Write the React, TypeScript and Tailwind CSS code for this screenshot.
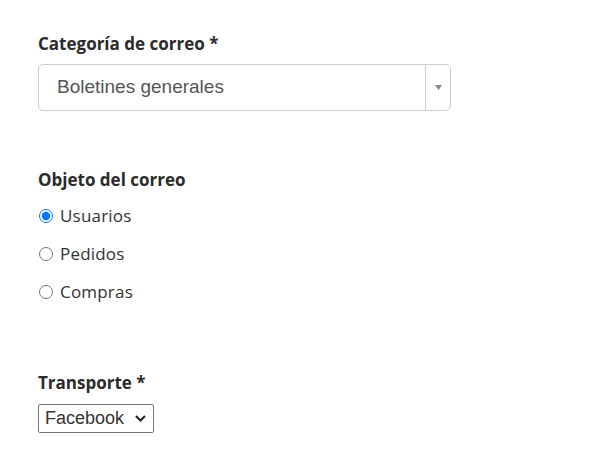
import { useState } from 'react';

const labelFont = { fontFamily: '"Open Sans", "Noto Sans", sans-serif' };
const arial = { fontFamily: '"Liberation Sans", Arial, sans-serif' };

export default function App() {
  const [target, setTarget] = useState('usuarios');

  const options = [
    { id: 'usuarios', label: 'Usuarios' },
    { id: 'pedidos', label: 'Pedidos' },
    { id: 'compras', label: 'Compras' },
  ];

  return (
    <div className="min-h-[473px] w-[590px] bg-white pl-[38px] pt-[33px] text-[#333]" style={labelFont}>
      <div className="w-[413px]">
        <label className="block text-[17px] font-bold leading-[22px] text-[#2b2b2b]">
          Categoría de correo *
        </label>
        <div className="mt-[9px] flex h-[47px] items-stretch rounded-[5px] border border-[#ccc] bg-white">
          <div className="flex flex-1 items-center pl-[18px] text-[19px] text-[#555]" style={arial}>
            Boletines generales
          </div>
          <div className="my-[-1px] w-px bg-[#ccc]" />
          <div className="flex w-[24px] items-center justify-center">
            <svg width="7" height="5" viewBox="0 0 7 5">
              <path d="M0 0h7L3.5 5z" fill="#888" />
            </svg>
          </div>
        </div>
      </div>

      <div className="mt-[58px]">
        <div className="text-[17px] font-bold leading-[22px] text-[#2b2b2b]">Objeto del correo</div>
        <div className="mt-[6px] flex flex-col">
          {options.map((o) => (
            <label
              key={o.id}
              className="flex h-[38px] items-center gap-[8px] text-[17px] tracking-[0.2px] text-[#333]"
            >
              <input
                type="radio"
                name="objeto"
                checked={target === o.id}
                onChange={() => setTarget(o.id)}
                className="m-0 h-[14px] w-[14px] translate-x-px"
              />
              {o.label}
            </label>
          ))}
        </div>
      </div>

      <div className="mt-[61px]">
        <label className="block text-[17px] font-bold leading-[22px] text-[#2b2b2b]">Transporte *</label>
        <div className="relative mt-[10px] w-[116px]">
          <select
            defaultValue="facebook"
            className="h-[29px] w-full appearance-none rounded-[2px] border border-[#767676] bg-white pl-[6px] text-[18px] text-[#333]"
            style={arial}
          >
            <option value="facebook">Facebook</option>
            <option value="twitter">Twitter</option>
            <option value="email">Email</option>
          </select>
          <svg
            className="pointer-events-none absolute right-[8px] top-[11px]"
            width="11"
            height="7"
            viewBox="0 0 11 7"
          >
            <path d="M1 1l4.5 4.5L10 1" fill="none" stroke="#222" strokeWidth="2" />
          </svg>
        </div>
      </div>
    </div>
  );
}
